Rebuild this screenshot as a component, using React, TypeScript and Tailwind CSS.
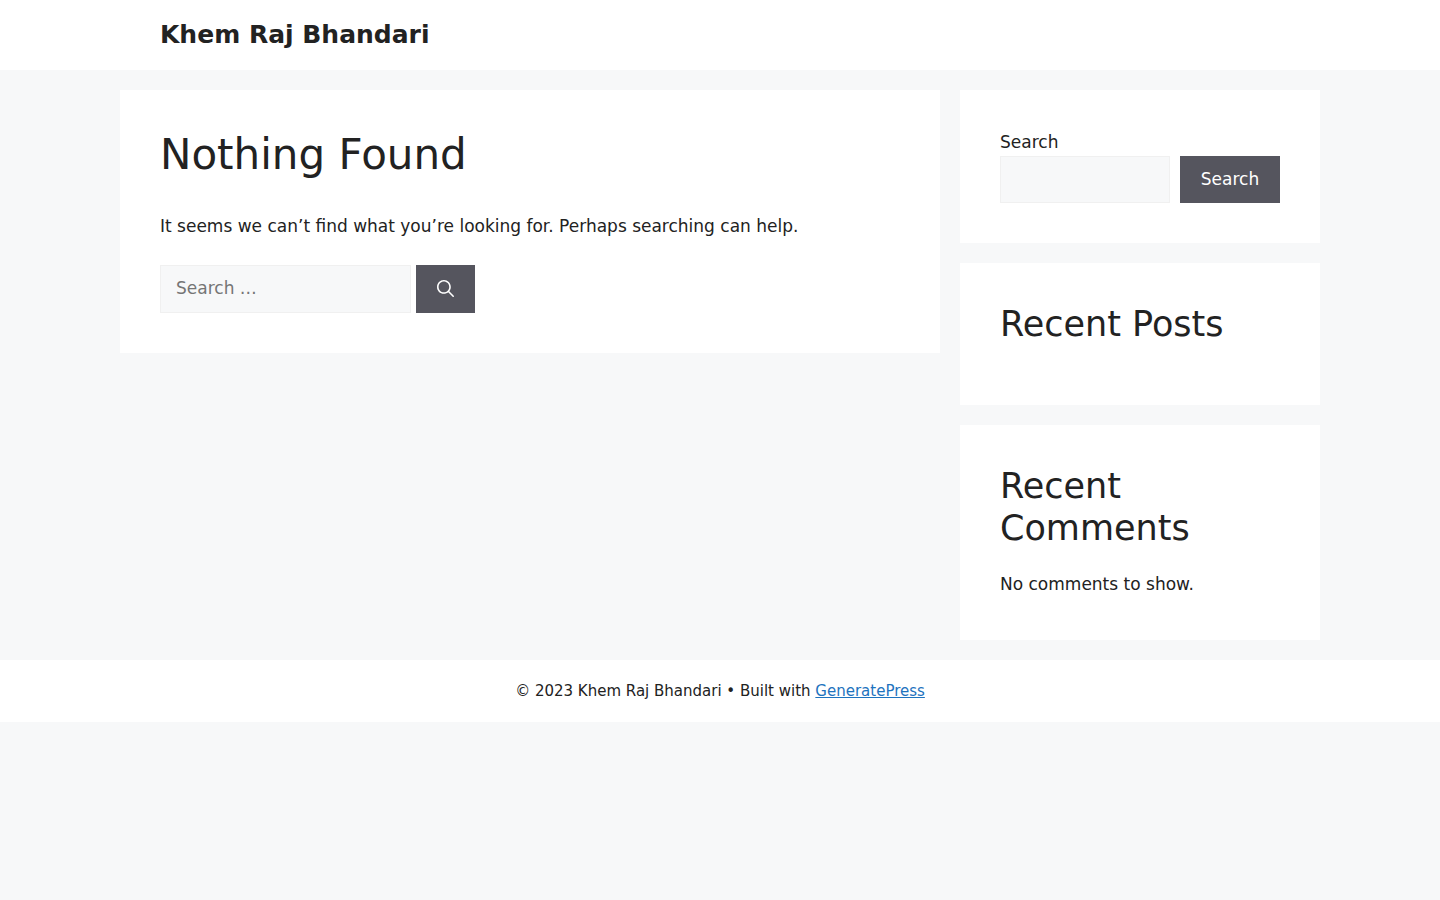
export default function App() {
  return (
    <div className="min-h-screen bg-[#f7f8f9] font-['DejaVu_Sans',sans-serif] text-[17px] leading-[25px] text-[#222222]">
      <header className="bg-white">
        <div className="mx-auto max-w-[1200px] px-10 py-5">
          <p className="text-[25px] leading-[30px] font-bold">
            <a href="#home">Khem Raj Bhandari</a>
          </p>
        </div>
      </header>

      <div className="mx-auto flex max-w-[1200px] items-start gap-5 py-5">
        <main className="min-w-0 flex-1 bg-white p-10">
          <h1 className="text-[42px] leading-[50px]">Nothing Found</h1>
          <p className="mt-[34px] mb-[26px]">
            It seems we can’t find what you’re looking for. Perhaps searching can help.
          </p>
          <form role="search" className="flex gap-[5px]" onSubmit={(e) => e.preventDefault()}>
            <input
              type="search"
              aria-label="Search for:"
              placeholder="Search …"
              className="h-12 w-[251px] border border-[#f0f0f0] bg-[#f7f8f9] px-[15px] pt-2.5 pb-3 text-[#666666] outline-none placeholder:text-[#757575]"
            />
            <button
              type="submit"
              aria-label="Search"
              className="flex h-12 w-[59px] items-start justify-center bg-[#55555e] pt-[15px] text-white"
            >
              <svg viewBox="0 0 512 512" className="size-[17px]" fill="currentColor" aria-hidden="true">
                <path
                  fillRule="evenodd"
                  clipRule="evenodd"
                  d="M208 48c-88.366 0-160 71.634-160 160s71.634 160 160 160 160-71.634 160-160S296.366 48 208 48zM0 208C0 93.125 93.125 0 208 0s208 93.125 208 208c0 48.741-16.765 93.566-44.843 129.024l133.826 134.018c9.366 9.379 9.355 24.575-.025 33.941-9.379 9.366-24.575 9.355-33.941-.025L337.238 370.987C301.747 399.167 256.839 416 208 416 93.125 416 0 322.875 0 208z"
                />
              </svg>
            </button>
          </form>
        </main>

        <aside className="flex w-[360px] shrink-0 flex-col gap-5">
          <section className="bg-white p-10">
            <form role="search" onSubmit={(e) => e.preventDefault()}>
              <label htmlFor="sidebar-search" className="mb-px block">
                Search
              </label>
              <div className="flex gap-2.5">
                <input
                  id="sidebar-search"
                  type="search"
                  className="h-[47px] min-w-0 flex-1 border border-[#f0f0f0] bg-[#f7f8f9] px-[15px] text-[#666666] outline-none"
                />
                <button type="submit" className="h-[47px] w-[100px] bg-[#55555e] text-white">
                  Search
                </button>
              </div>
            </form>
          </section>
          <section className="bg-white p-10">
            <h2 className="mb-5 text-[35px] leading-[42px]">Recent Posts</h2>
          </section>
          <section className="bg-white p-10">
            <h2 className="mb-5 text-[35px] leading-[42px]">Recent Comments</h2>
            <p className="leading-[31px]">No comments to show.</p>
          </section>
        </aside>
      </div>

      <footer className="bg-white">
        <div className="mx-auto max-w-[1200px] px-10 py-5 text-center text-[15px] leading-[22px]">
          © 2023 Khem Raj Bhandari • Built with{" "}
          <a href="https://generatepress.com" className="text-[#1e73be] underline">
            GeneratePress
          </a>
        </div>
      </footer>
    </div>
  );
}
